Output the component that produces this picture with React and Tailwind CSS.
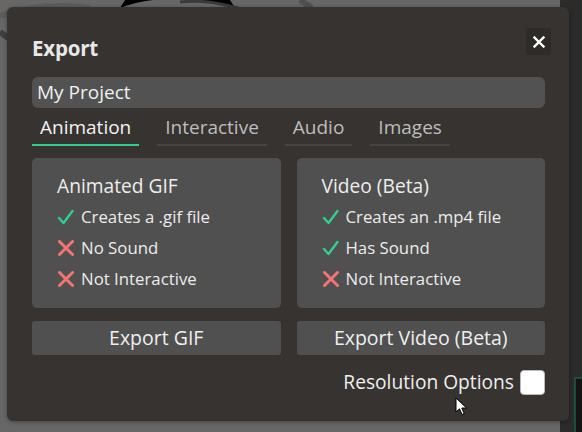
import React from 'react';

const font = { fontFamily: '"Open Sans", Lato, sans-serif' };

function CheckIcon() {
  return (
    <svg width="18" height="16" viewBox="0 0 18 16" className="shrink-0">
      <path d="M2 9 L6.5 14 L15.5 2" fill="none" stroke="#2fd08e" strokeWidth="2.4" strokeLinecap="round" strokeLinejoin="round" />
    </svg>
  );
}

function CrossIcon() {
  return (
    <svg width="18" height="16" viewBox="0 0 18 16" className="shrink-0">
      <path d="M2.5 1.5 L15.5 14.5 M15.5 1.5 L2.5 14.5" fill="none" stroke="#f27474" strokeWidth="3" strokeLinecap="round" />
    </svg>
  );
}

function Feature({ ok, text }) {
  return (
    <div className="flex items-center gap-[6px] h-[31px]">
      {ok ? <CheckIcon /> : <CrossIcon />}
      <span className="text-[16.8px] leading-[24px] text-[#ececec]">{text}</span>
    </div>
  );
}

function ExportCard({ title, features }) {
  return (
    <div className="h-[150px] rounded-[5px] bg-[#505050] pl-[25px] pt-[15px]">
      <div className="text-[19.2px] leading-[26px] text-[#ededed] mb-[2px]">{title}</div>
      {features.map((f) => (
        <Feature key={f.text} ok={f.ok} text={f.text} />
      ))}
    </div>
  );
}

const tabs = [
  { label: 'Animation', active: true },
  { label: 'Interactive' },
  { label: 'Audio' },
  { label: 'Images' },
];

export default function App() {
  return (
    <div className="relative w-[582px] h-[432px] overflow-hidden bg-[#676767]" style={font}>
      {/* canvas behind the dialog */}
      <div className="absolute right-0 top-0 w-[22px] h-[432px] bg-[#2b2b2b]" />
      <svg className="absolute left-0 top-0" width="582" height="432">
        <path d="M0 16 C 30 6, 60 4, 90 8" fill="none" stroke="#5c5c5c" strokeWidth="6" />
        <path d="M120 8 C 150 -4, 190 -4, 235 8 L 230 0 L 125 0 Z" fill="#000" />
        <path d="M180 2 C 200 0, 215 2, 238 8" fill="none" stroke="#3a3a3a" strokeWidth="3" />
        <path d="M300 0 L 312 8" fill="none" stroke="#505050" strokeWidth="6" />
        <path d="M0 32 L 8 38" fill="none" stroke="#3f3f3f" strokeWidth="6" />
        <rect x="575" y="378" width="10" height="60" fill="#141414" stroke="#1d5c4a" strokeWidth="1.5" />
      </svg>

      {/* dialog */}
      <div className="absolute left-[7px] top-[7px] w-[562px] h-[414px] rounded-[6px] bg-[#373331] shadow-[0_1px_4px_rgba(0,0,0,0.35)] pl-[25px] pr-[24px] pt-[28px]">
        <button className="absolute right-[18px] top-[21px] w-[25px] h-[27px] rounded-[3px] bg-[#2e2b29] flex items-center justify-center">
          <svg width="12" height="12" viewBox="0 0 12 12">
            <path d="M1.5 1.5 L10.5 10.5 M10.5 1.5 L1.5 10.5" stroke="#fff" strokeWidth="2.4" strokeLinecap="square" />
          </svg>
        </button>

        <h1 className="text-[20.5px] leading-[27px] font-bold text-[#e8e8e8] tracking-[-0.2px]">Export</h1>

        <div className="mt-[15px] h-[31px] rounded-[6px] bg-[#525252] flex items-center pl-[5px] text-[19px] text-[#f0f0f0]">
          My Project
        </div>

        <div className="flex gap-[18px] mt-[3px]">
          {tabs.map((t) => (
            <div
              key={t.label}
              className={
                'px-[8px] pt-[3px] pb-[3px] border-b-2 text-[19px] leading-[27px] ' +
                (t.active ? 'border-[#2ecc8f] text-[#f2f2f2]' : 'border-[#474442] text-[#bdbdbd]')
              }
            >
              {t.label}
            </div>
          ))}
        </div>

        <div className="grid grid-cols-2 gap-[16px] mt-[12px]">
          <ExportCard
            title="Animated GIF"
            features={[
              { ok: true, text: 'Creates a .gif file' },
              { ok: false, text: 'No Sound' },
              { ok: false, text: 'Not Interactive' },
            ]}
          />
          <ExportCard
            title="Video (Beta)"
            features={[
              { ok: true, text: 'Creates an .mp4 file' },
              { ok: true, text: 'Has Sound' },
              { ok: false, text: 'Not Interactive' },
            ]}
          />
        </div>

        <div className="grid grid-cols-2 gap-[16px] mt-[13px]">
          <button className="h-[34px] rounded-[3px] bg-[#505050] text-[19.5px] text-[#efefef]">Export GIF</button>
          <button className="h-[34px] rounded-[3px] bg-[#505050] text-[19.5px] text-[#efefef]">Export Video (Beta)</button>
        </div>

        <div className="flex items-center justify-end gap-[6px] mt-[14px]">
          <span className="text-[19.2px] leading-[26px] text-[#efefef]">Resolution Options</span>
          <div className="w-[25px] h-[25px] rounded-[4px] bg-white border border-[#bbb]" />
        </div>
      </div>

      {/* mouse pointer */}
      <svg className="absolute left-[455px] top-[397px]" width="14" height="20" viewBox="0 0 14 20">
        <path d="M1 1 L1 15 L4.5 11.8 L7 17.5 L9.2 16.5 L6.8 11 L11.5 11 Z" fill="#fff" stroke="#000" strokeWidth="1" strokeLinejoin="round" />
      </svg>
    </div>
  );
}
